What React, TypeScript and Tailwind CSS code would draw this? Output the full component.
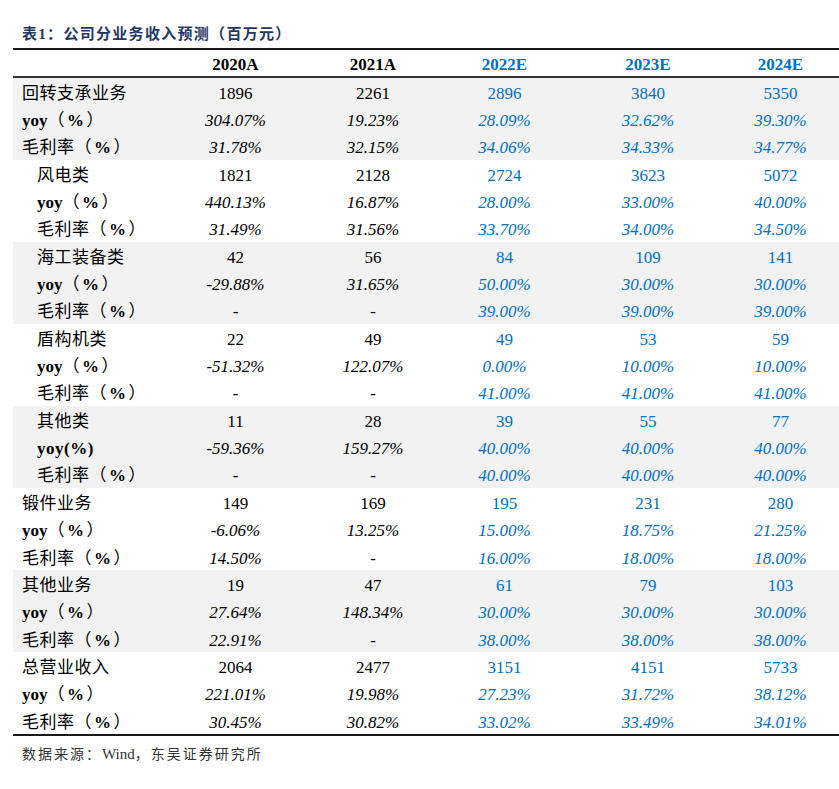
const cols = "grid grid-cols-[147px_151px_124px_139px_148px_117px]";

type Row = { label: string; sub?: boolean; vals: string[]; italic?: boolean };
type Group = { shaded: boolean; rows: Row[] };

const yoy = "yoy（%）";
const gm = "毛利率（%）";

const groups: Group[] = [
  {
    shaded: true,
    rows: [
      { label: "回转支承业务", vals: ["1896", "2261", "2896", "3840", "5350"] },
      { label: yoy, italic: true, vals: ["304.07%", "19.23%", "28.09%", "32.62%", "39.30%"] },
      { label: gm, italic: true, vals: ["31.78%", "32.15%", "34.06%", "34.33%", "34.77%"] },
    ],
  },
  {
    shaded: false,
    rows: [
      { label: "风电类", sub: true, vals: ["1821", "2128", "2724", "3623", "5072"] },
      { label: yoy, sub: true, italic: true, vals: ["440.13%", "16.87%", "28.00%", "33.00%", "40.00%"] },
      { label: gm, sub: true, italic: true, vals: ["31.49%", "31.56%", "33.70%", "34.00%", "34.50%"] },
    ],
  },
  {
    shaded: true,
    rows: [
      { label: "海工装备类", sub: true, vals: ["42", "56", "84", "109", "141"] },
      { label: yoy, sub: true, italic: true, vals: ["-29.88%", "31.65%", "50.00%", "30.00%", "30.00%"] },
      { label: gm, sub: true, italic: true, vals: ["-", "-", "39.00%", "39.00%", "39.00%"] },
    ],
  },
  {
    shaded: false,
    rows: [
      { label: "盾构机类", sub: true, vals: ["22", "49", "49", "53", "59"] },
      { label: yoy, sub: true, italic: true, vals: ["-51.32%", "122.07%", "0.00%", "10.00%", "10.00%"] },
      { label: gm, sub: true, italic: true, vals: ["-", "-", "41.00%", "41.00%", "41.00%"] },
    ],
  },
  {
    shaded: true,
    rows: [
      { label: "其他类", sub: true, vals: ["11", "28", "39", "55", "77"] },
      { label: "yoy(%)", sub: true, italic: true, vals: ["-59.36%", "159.27%", "40.00%", "40.00%", "40.00%"] },
      { label: gm, sub: true, italic: true, vals: ["-", "-", "40.00%", "40.00%", "40.00%"] },
    ],
  },
  {
    shaded: false,
    rows: [
      { label: "锻件业务", vals: ["149", "169", "195", "231", "280"] },
      { label: yoy, italic: true, vals: ["-6.06%", "13.25%", "15.00%", "18.75%", "21.25%"] },
      { label: gm, italic: true, vals: ["14.50%", "-", "16.00%", "18.00%", "18.00%"] },
    ],
  },
  {
    shaded: true,
    rows: [
      { label: "其他业务", vals: ["19", "47", "61", "79", "103"] },
      { label: yoy, italic: true, vals: ["27.64%", "148.34%", "30.00%", "30.00%", "30.00%"] },
      { label: gm, italic: true, vals: ["22.91%", "-", "38.00%", "38.00%", "38.00%"] },
    ],
  },
  {
    shaded: false,
    rows: [
      { label: "总营业收入", vals: ["2064", "2477", "3151", "4151", "5733"] },
      { label: yoy, italic: true, vals: ["221.01%", "19.98%", "27.23%", "31.72%", "38.12%"] },
      { label: gm, italic: true, vals: ["30.45%", "30.82%", "33.02%", "33.49%", "34.01%"] },
    ],
  },
];

const serif = "font-['Liberation_Serif','Noto_Sans_CJK_SC',serif]";

// "yoy" is bold, the % sign is bold, full-width parens are spaced out
function Label({ text }: { text: string }) {
  if (text === "yoy(%)") return <span className="font-bold">yoy(%)</span>;
  const pct = text.indexOf("（%）");
  if (pct < 0) return <span>{text}</span>;
  const head = text.slice(0, pct);
  return (
    <span>
      <span className={head === "yoy" ? "font-bold tracking-normal" : ""}>{head}</span>
      <span>（</span>
      <span className="font-bold px-[2px]">%</span>
      <span>）</span>
    </span>
  );
}

export default function App() {
  return (
    <div className={`w-[839px] h-[789px] bg-white text-black ${serif}`}>
      <div className="pt-[23px] pl-[22px] h-[48px] text-[15px] font-bold text-[#1f3864] tracking-[1.3px]">
        表1：公司分业务收入预测（百万元）
      </div>
      <div className="ml-[13px] border-t-2 border-b-2 border-[#1a1a1a]">
        <div className={`${cols} h-[28px] pt-[3px] items-center border-b-2 border-[#333] font-bold text-[17px] leading-none`}>
          <div />
          <div className="text-center">2020A</div>
          <div className="text-center">2021A</div>
          <div className="text-center text-[#0070c0]">2022E</div>
          <div className="text-center text-[#0070c0]">2023E</div>
          <div className="text-center text-[#0070c0]">2024E</div>
        </div>
        {groups.map((g, gi) => (
          <div key={gi} className={g.shaded ? "bg-[#f2f2f2]" : "bg-white"}>
            {g.rows.map((r, ri) => (
              <div key={ri} className={`${cols} h-[27.35px] pt-[3px] items-center text-[17px] leading-none`}>
                <div className={`${r.sub ? "pl-[24px]" : "pl-[9px]"} tracking-[0.5px] whitespace-nowrap`}>
                  <Label text={r.label} />
                </div>
                {r.vals.map((v, vi) => (
                  <div
                    key={vi}
                    className={`text-center ${r.italic ? "italic" : ""} ${vi >= 2 ? "text-[#0070c0]" : ""}`}
                  >
                    {v}
                  </div>
                ))}
              </div>
            ))}
          </div>
        ))}
      </div>
      <div className="pt-[7px] pl-[22px] text-[14px] text-[#333]">
        <span className="tracking-[2px]">数据来源：</span>
        <span className="text-[15px]">Wind</span>
        <span className="tracking-[2px]">，东吴证券研究所</span>
      </div>
    </div>
  );
}
